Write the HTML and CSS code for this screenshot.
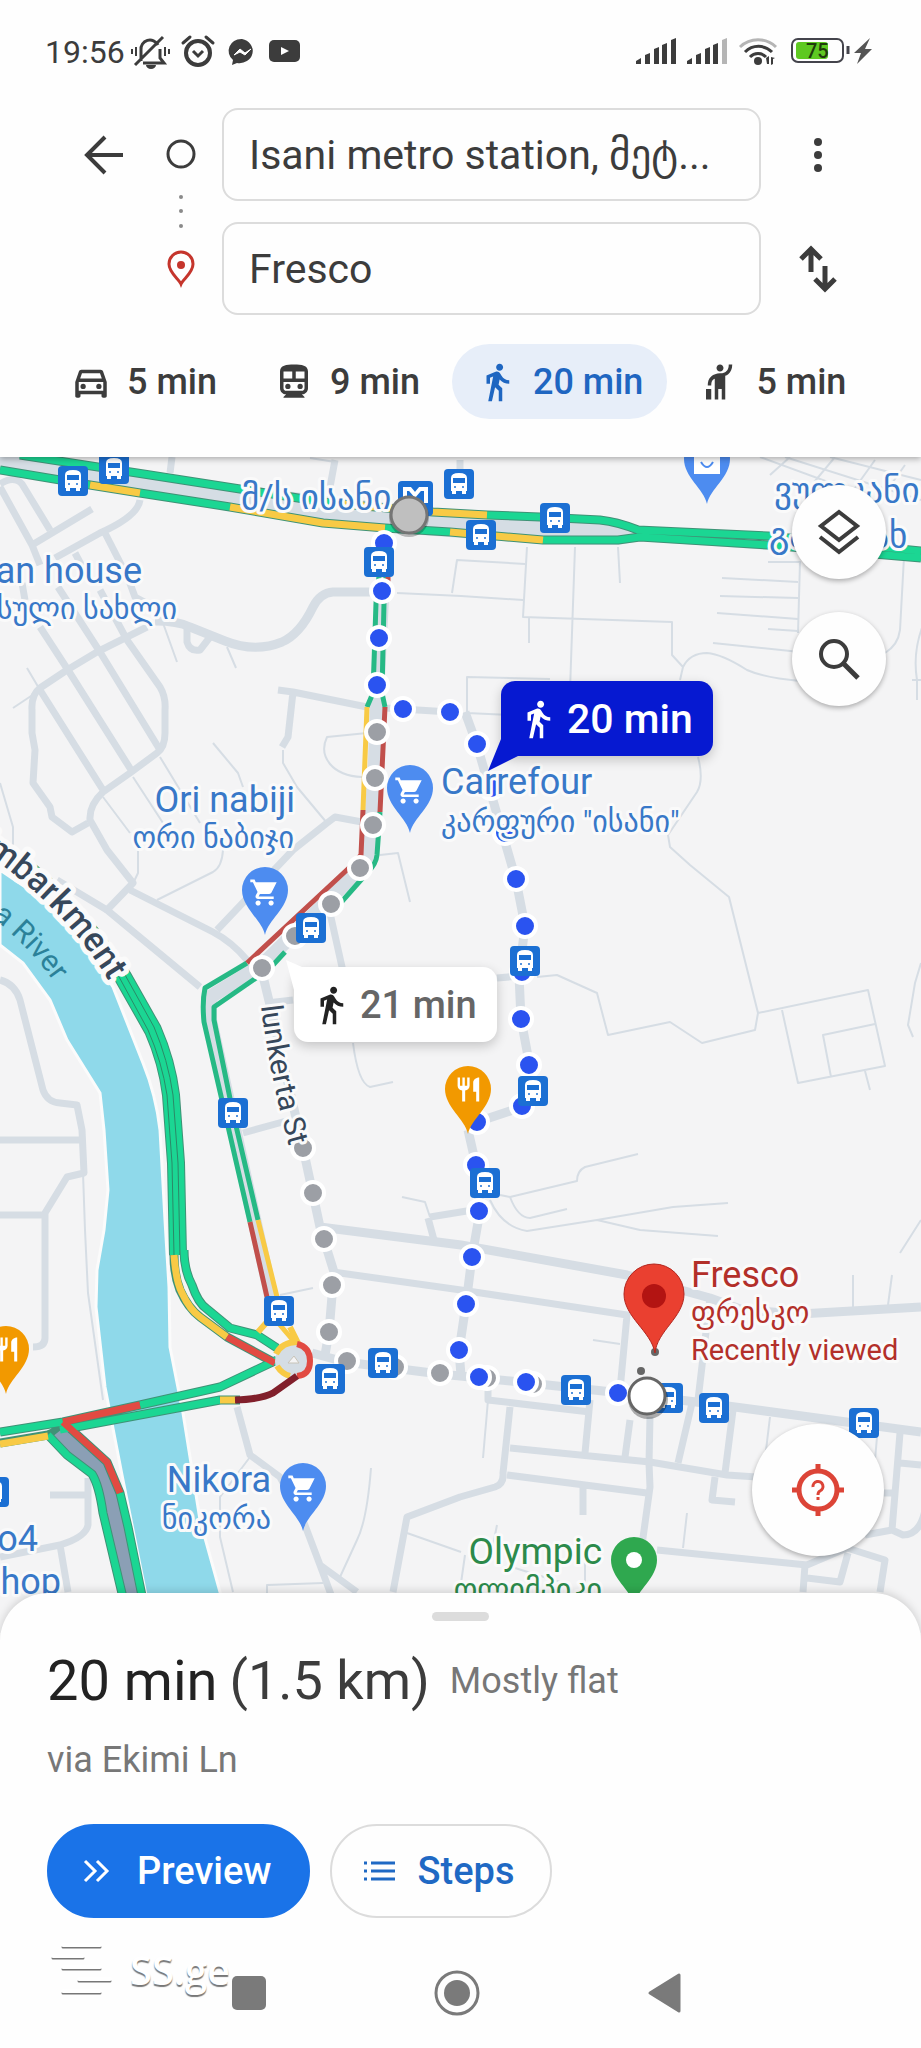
FILE: index.html
```html
<!DOCTYPE html>
<html lang="en">
<head>
    <meta charset="UTF-8">
    <meta name="viewport" content="width=device-width, initial-scale=1.0">
    <title>Directions to Fresco</title>
    <link rel="stylesheet" href="styles.css">
</head>
<body>
    <header class="header">
        <div class="status-bar">
            <span class="clock">19:56</span>
            <svg class="status-left" viewBox="0 0 172 36" aria-hidden="true">
                <!-- muted bell -->
                <g fill="none" stroke="#3c3c3c" stroke-width="3">
                    <path d="M10 27V16a9 9 0 0 1 17-5M29 15v9l4 5H12M4 31 32 3"/>
                    <path d="M5 13v9M1 15v5M34 13v9M38 15v5" stroke-width="2"/>
                </g>
                <path d="M15 31h10a5 4 0 0 1-10 0z" fill="#3c3c3c"/>
                <!-- alarm -->
                <g fill="none" stroke="#3c3c3c" stroke-width="4">
                    <circle cx="67" cy="19" r="12"/>
                    <path d="M62 17l5 5 5-5" stroke-width="3"/>
                    <path d="M52 9l7-6M75 3l7 6" stroke-linecap="round" stroke-width="3"/>
                </g>
                <!-- messenger -->
                <path d="M111 5a13 12 0 1 1-5 24l-5 2 1-5A13 12 0 0 1 111 5z" fill="#3c3c3c"/>
                <path d="M103 21l6-6 5 4 6-4-6 6-5-3z" fill="#fff" stroke="#fff"/>
                <!-- video -->
                <rect x="138" y="6" width="31" height="22" rx="5" fill="#3c3c3c"/>
                <path d="M150 13v8l8-4z" fill="#fff"/>
            </svg>
            <svg class="status-right" viewBox="0 0 238 36" aria-hidden="true">
                <g fill="#3c3c3c">
                    <path d="M1 30v-3l5-3v6zM10 30v-9l5-2v11zM19 30V15l5-2v17zM27 30V11l5-2v21zM36 30V6l5-2v26z"/>
                    <path d="M52 30v-3l5-3v6zM61 30v-9l5-2v11zM70 30V15l5-2v17zM78 30V11l5-2v21z"/>
                    <path d="M87 30V6l5-2v26z" fill="#b5b5b5"/>
                    <circle cx="123" cy="27" r="4"/>
                    <path d="M131 24l3-2v8h-2zM136 31v-8l4 1-2 1v5z"/>
                </g>
                <g fill="none" stroke="#3c3c3c" stroke-width="3">
                    <path d="M105 13a26 26 0 0 1 36 0" stroke="#b5b5b5"/>
                    <path d="M110 18a19 19 0 0 1 27 0"/>
                    <path d="M115 23a11 11 0 0 1 16 0"/>
                    <rect x="157" y="5" width="51" height="23" rx="6" stroke="#44444c" stroke-width="2"/>
                    <path d="M213 12v8" stroke="#44444c"/>
                </g>
                <rect x="161" y="8" width="32" height="17" rx="3" fill="#5ec921"/>
                <text x="171" y="24" class="battery-text">75</text>
                <path d="M235 4l-16 15h7l-4 11 15-15h-7z" fill="#555"/>
            </svg>
        </div>

        <form class="search">
            <button type="button" class="icon-button back" aria-label="Back">
                <svg viewBox="0 0 42 42" width="42" height="42" fill="none" stroke="#3c3c3c" stroke-width="4"><path d="M40 21H6M22 3 4 21l18 18"/></svg>
            </button>
            <svg class="rail" viewBox="0 0 80 207" width="80" height="207" aria-hidden="true">
                <circle cx="39" cy="46" r="13" fill="none" stroke="#3c3c3c" stroke-width="3"/>
                <g fill="#8a8a8a"><circle cx="39" cy="89" r="2"/><circle cx="39" cy="103" r="2"/><circle cx="39" cy="118" r="2"/></g>
                <path d="M39 176c-2-5-12-11-12-20a12 12 0 0 1 24 0c0 9-10 15-12 20z" fill="none" stroke="#c5352c" stroke-width="3"/>
                <circle cx="39" cy="157" r="4" fill="#c5352c"/>
            </svg>
            <input type="text" class="field" aria-label="Starting point" value="Isani metro station, მეტ...">
            <button type="button" class="icon-button" aria-label="More options">
                <svg viewBox="0 0 42 42" width="42" height="42" fill="#3c3c3c"><circle cx="21" cy="8" r="4"/><circle cx="21" cy="21" r="4"/><circle cx="21" cy="34" r="4"/></svg>
            </button>
            <input type="text" class="field field-to" aria-label="Destination" value="Fresco">
            <button type="button" class="icon-button" aria-label="Swap start and destination">
                <svg viewBox="0 0 42 48" width="42" height="48" fill="none" stroke="#3c3c3c" stroke-width="5"><path d="M14 27V4M4 14 14 4l10 10M28 21v23M18 34l10 10 10-10"/></svg>
            </button>
        </form>

        <nav class="modes" aria-label="Travel mode">
            <button type="button" class="mode">
                <svg class="icon" viewBox="0 0 24 24"><path d="M18.92 6.01C18.72 5.42 18.16 5 17.5 5h-11c-.66 0-1.21.42-1.42 1.01L3 12v8c0 .55.45 1 1 1h1c.55 0 1-.45 1-1v-1h12v1c0 .55.45 1 1 1h1c.55 0 1-.45 1-1v-8l-2.08-5.99zM6.85 7h10.29l1.04 3H5.81l1.04-3zM19 17H5v-5h14v5z"/><circle cx="7.5" cy="14.5" r="1.5"/><circle cx="16.5" cy="14.5" r="1.5"/></svg>
                5 min
            </button>
            <button type="button" class="mode">
                <svg class="icon" viewBox="0 0 24 24"><path fill-rule="evenodd" d="M12 2c-4.4 0-8 .5-8 4v9.500c0 1.900 1.500 3.500 3.500 3.500L6 20.500v.5h12v-.5L16.500 19c2 0 3.500-1.600 3.500-3.500V6c0-3.500-3.600-4-8-4zM6 6h5v4H6zM13 6h5v4h-5zM6 12h12v3.500c0 .8-.7 1.500-1.500 1.500h-9C6.700 17 6 16.300 6 15.500z"/><circle cx="8.500" cy="14.500" r="1.500"/><circle cx="15.500" cy="14.500" r="1.500"/></svg>
                9 min
            </button>
            <button type="button" class="mode active">
                <svg class="icon" viewBox="0 0 24 24"><path d="M13.5 5.500c1.100 0 2-.9 2-2s-.9-2-2-2-2 .9-2 2 .9 2 2 2zM9.800 8.900L7 23h2.100l1.800-8 2.100 2v6h2v-7.500l-2.100-2 .6-3C14.800 12 16.800 13 19 13v-2c-1.900 0-3.500-1-4.300-2.400l-1-1.600c-.4-.6-1-1-1.700-1-.3 0-.5.1-.8.1L6 8.300V13h2V9.600l1.800-.7"/></svg>
                20 min
            </button>
            <button type="button" class="mode">
                <svg class="icon" viewBox="0 0 24 24"><path d="M12 6c-1.100 0-2-.9-2-2s.9-2 2-2 2 .9 2 2S13.100 6 12 6zM17 2h2c0 2.700-.93 4.410-2.300 5.500-.5.400-1.100.7-1.700.9V22h-2v-6h-2v6H9V10.100c-.3.100-.5.200-.6.300C7.870 10.810 7 11.430 7 14H5c0-2.060.35-3.780 2.110-5.290C8.210 7.810 10 7 12 7s2.680-.46 3.480-1.060C15.960 5.550 17 4.760 17 2zM4 16h3v6H4z"/></svg>
                5 min
            </button>
        </nav>
    </header>

    <main class="map">
        <svg class="map-canvas" viewBox="0 457 921 1176" preserveAspectRatio="xMidYMin slice" role="img" aria-label="Walking routes from Isani metro station to Fresco">
            <defs>
                <g id="bus">
                    <rect x="-15" y="-15" width="30" height="30" rx="4" fill="#1b6fd3"/>
                    <path fill="#fff" fill-rule="evenodd" d="M-8 7V-6q0-5 8-5t8 5V7H7v3H3V7h-6v3h-4V7zM-6-6v5H6v-5z"/>
                    <circle cx="-4" cy="3" r="1" fill="#1b6fd3"/><circle cx="4" cy="3" r="1" fill="#1b6fd3"/>
                </g>
                <path id="pin" d="M0 0C-3-15-23-27-23-45A23 23 0 0 1 23-45C23-27 3-15 0 0z"/>
                <path id="cart" fill="#fff" d="M7 18c-1.100 0-2 .9-2 2s.9 2 2 2 2-.9 2-2-.9-2-2-2zM1 2v2h2l3.600 7.600-1.350 2.450C4.500 15.400 5.500 17 7 17h12v-2H7.400l1-2h7.200c.7 0 1.400-.4 1.700-1l4-8H5.200l-.9-2H1zm16 16c-1.100 0-2 .9-2 2s.9 2 2 2 2-.9 2-2-.9-2-2-2z"/>
                <path id="fork" fill="#fff" d="M11 9H9V2H7v7H5V2H3v7c0 2.100 1.700 3.800 3.800 4v9h2.500v-9C11.300 12.800 13 11.100 13 9V2h-2v7zm5-3v8h2.500v8H21V2c-2.800 0-5 2.200-5 4z"/>
                <g id="cart-pin">
                    <use href="#pin" fill="#4d8cf0"/>
                    <use href="#cart" transform="translate(-16 -58) scale(1.3)"/>
                </g>
                <g id="food-pin">
                    <use href="#pin" fill="#f29900"/>
                    <use href="#fork" transform="translate(-14 -59) scale(1.2)"/>
                </g>
                <circle id="dot" r="11"/>
                <path id="embankment-line" d="M-76 818Q46 878 109 981"/>
                <path id="river-line" d="M-66 880Q12 922 54 982"/>
                <path id="street-line" d="M261 1006Q270 1080 293 1160"/>
            </defs>

            <rect y="457" width="921" height="1176" fill="#f4f4f5"/>
            <path class="water" d="M0 945L23 963 50 1000 67 1040 100 1093 104 1130 108 1190 104 1230 97 1270 96 1307 105 1387 122 1475 155 1640H232L220 1592 200 1520 183 1413 170 1347 169 1287 165 1220 160 1130Q156 1095 143 1063L113 987 83 940Q60 912 40 897L0 870z"/>

            <!-- footpaths and driveways -->
            <g class="lane">
                <path d="M13 708L40 690 27 668M163 623L177 662M227 647L236 668M283 750V763L297 787 327 823M367 733L327 737Q320 752 330 764T362 777M213 743L238 773 243 787M160 757L200 823M133 777L163 823M103 797L130 833"/>
                <path d="M310 458L335 462M452 593L457 560 525 564M397 593L461 596 523 600M527 547L523 617 672 622V655L683 667 680 680M575 547L570 690M618 547L620 583M529 617V643M467 713V677L550 679M467 713L510 715M683 667Q690 653 707 653 722 654 747 670 765 678 800 681"/>
                <path d="M768 562H800L798 633M722 578L798 582M720 596L798 598M717 613L798 619M768 629L798 631M713 643L800 652M904 557L900 630Q898 645 885 653M925 620Q912 650 917 680V700M912 680H921"/>
                <path d="M760 457L850 490M785 457L921 500M830 457L921 480M770 475L790 457M810 487L835 457M850 495L875 460M880 500L905 465"/>
                <path d="M698 757Q704 780 697 792L668 835 670 847 690 865 729 897 758 1013 755 1030 702 1043 670 1022 608 1035 597 993 557 975 537 977M758 1013L868 990 885 1066 798 1083 782 1010M875 1024L823 1035 831 1077M865 1071L870 1090M921 963L915 983 908 1025 913 1037"/>
                <path d="M500 1195L510 1197 577 1181Q577 1171 585 1167L638 1154M510 1197Q518 1218 530 1218L567 1209M490 1200Q502 1227 527 1231L597 1220 673 1207 728 1203M597 1220L640 1230 718 1236M921 1220L900 1253"/>
                <path d="M402 1197L425 1202 430 1217M83 1173L85 1230 88 1293 103 1400M0 783L13 827V850M138 847V873L130 890M223 850Q222 867 213 872L157 900"/>
                <path d="M353 1043Q358 1083 370 1087L393 1082M380 855L398 853 410 902M313 1288L280 1295M371 1468Q367 1520 357 1540L340 1577M250 1457L220 1497V1537L233 1592M267 1600V1585L323 1583M407 1533L461 1552"/>
                <path d="M488 1400L483 1458M770 1417L766 1450M877 1437L875 1460M687 1513L683 1548M593 1340L620 1344M853 1275V1307M892 1275L888 1305M515 1568L560 1582M585 1560V1590M465 1555L460 1590M497 1525L493 1545"/>
            </g>

            <!-- local streets -->
            <g class="street">
                <path d="M0 484Q14 475 22 484L50 530M0 487L32 545 40 565M32 545L92 509M140 500Q138 516 100 533L55 558M105 533L128 578 135 597 150 605M75 553L84 570M22 583L25 600M172 457L170 473M335 460L330 487M460 460V470"/>
                <path d="M40 690L103 790M40 627L68 670 133 773M58 587L100 652 160 750M100 590L127 640 160 687Q166 697 165 710V733Q165 747 157 753L130 773 103 792Q89 805 90 820L107 850 133 883 107 910 200 987"/>
                <path d="M147 627L97 652 67 670 40 688Q31 695 32 710V733L35 750 33 783 50 807 52 817 72 832 88 823M187 627V642Q190 652 200 650L210 637M278 690L293 692 367 707M293 692L288 737 282 747M385 708L450 712M362 822L335 817 327 823 293 850 217 930"/>
                <path d="M130 890L213 932Q232 942 247 960M57 880L107 910M330 913L342 967 349 1000M243 1133L290 1120M267 1003L293 1000M497 978L520 976"/>
                <path d="M0 980Q15 984 20 1000L43 1090Q47 1102 60 1103L77 1105 82 1130 84 1173 67 1177 45 1213V1338Q45 1347 33 1347M0 1140H82M0 1215H45M50 1495H88M88 1478V1525Q86 1537 60 1545L0 1557M60 1545L68 1592"/>
                <path d="M430 1217L479 1209M428 1218L434 1240M333 1272L461 1290 627 1315 620 1390M710 1298L698 1400M630 1420L625 1457M650 1417L649 1463 650 1487 642 1545M692 1403L678 1463M733 1410L725 1473"/>
                <path d="M510 1407L503 1473Q504 1484 495 1487L460 1497 407 1517 393 1592M488 1387V1400L590 1412M590 1400L585 1453M510 1448L650 1462 727 1475 770 1478M507 1475L647 1493M583 1487V1515M715 1477L712 1500 735 1502"/>
                <path d="M657 1550L807 1565 847 1548 885 1560 880 1592M805 1565L803 1592M807 1578L840 1582 848 1553M900 1433L892 1530 865 1535M900 1463L921 1465M880 1493H892M925 1510Q920 1535 903 1535L892 1530M237 1407L250 1455 280 1477 303 1520 320 1565 333 1600M320 1565L357 1592"/>
            </g>

            <!-- wider streets under the walking routes -->
            <g class="avenue">
                <path d="M155 621Q178 621 190 627L225 641Q255 653 282 642 300 634 313 607 320 593 333 592H380"/>
                <path d="M465 712L477 745 490 790 516 880 525 926 519 975 521 1019 530 1067 522 1107 477 1122M468 1130L476 1165 480 1211 472 1257 466 1304 459 1351 461 1375"/>
                <path d="M261 968L270 1005 303 1148 320 1227 334 1272 329 1332 325 1355M320 1227L461 1245 627 1275 710 1298 743 1310 800 1314 921 1307M312 1353L345 1362 440 1374 520 1382 640 1395 720 1405 921 1432"/>
            </g>

            <!-- highway -->
            <path fill="#d5dde4" d="M0 452L240 486 433 508 617 518 640 528 921 551V560L640 541 618 545 543 544 380 532 230 511 0 474z"/>
            <g class="casing">
                <path d="M20 455L150 475 240 489 330 503 433 512 487 515 540 517 600 520Q618 522 638 530L768 536 921 551"/>
                <path d="M0 470L90 485 140 493 230 507 323 523 385 528 450 532 543 540H618L640 537 768 545 921 558"/>
            </g>
            <g class="traffic">
                <path d="M20 455L150 475 240 489 330 503M487 515L540 517 600 520Q618 522 638 530L768 536 921 551M0 470L90 485M140 493L230 507M385 528L450 532M543 540H618L640 537 768 545 921 558"/>
                <path class="slow" d="M330 503L433 512 487 515M90 485L140 493M230 507L323 523 385 528M450 532L543 540"/>
            </g>

            <!-- street with traffic in both directions -->
            <path class="median" d="M384 560L377 697 375 760 371 830Q370 862 357 872L262 965 210 997V1020L272 1300"/>
            <g class="traffic narrow">
                <path d="M379 577L376 603 373 693 367 707M386 577L384 603 382 693 385 707M380 812L377 855Q376 864 368 872L337 907M285 952L273 965M269 969L214 1007V1020L233 1113 258 1220M247 963L205 988Q202 1002 204 1022L250 1222"/>
                <path class="slow" d="M367 707L363 810M258 1220L277 1297 280 1325 297 1345"/>
                <path class="jam-soft" d="M385 707L380 812M363 810L361 855 350 867 247 963M250 1222L267 1297M388 577V582"/>
            </g>

            <!-- embankment -->
            <path class="casing wide" d="M-10 842Q64 888 123 977L153 1030Q167 1062 171 1095L176 1163 178 1255"/>
            <path class="traffic wide" d="M-10 842Q64 888 123 977L153 1030Q167 1062 171 1095L176 1163 178 1255"/>
            <path class="hairline" d="M118 975L148 1030Q162 1062 167 1095L172 1163 174 1255M124 973L154 1027Q168 1060 173 1095L178 1163 180 1255"/>
            <g class="casing">
                <path d="M174 1255Q174 1275 180 1290 188 1308 200 1317L227 1337 275 1363M184 1250Q184 1270 192 1285 198 1303 207 1309L230 1328 257 1335 277 1348"/>
                <path d="M0 1432L63 1422 140 1405 220 1387 277 1360M0 1443L48 1435 60 1430 220 1400 240 1400"/>
            </g>
            <path fill="#8b9fb5" d="M52 1437L67 1425 107 1462 120 1493 155 1640H128L103 1513 95 1478z"/>
            <g class="casing">
                <path d="M48 1435L67 1455 92 1474Q99 1485 103 1513L133 1640M63 1422L107 1462 120 1493 128 1527 151 1640"/>
            </g>
            <g class="traffic">
                <path d="M184 1250Q184 1270 192 1285 198 1303 207 1309L230 1328 257 1335 277 1348M0 1432L63 1422M140 1405L220 1387 277 1360M220 1400L60 1430M48 1435L67 1455 92 1474Q99 1485 103 1513L133 1640M120 1493L128 1527 151 1640"/>
                <path class="slow" d="M174 1255Q176 1282 182 1293 190 1310 200 1317L227 1337M48 1436L0 1444M220 1400H236"/>
                <path class="jam" d="M63 1422L140 1405M63 1422L107 1462 120 1493M227 1337L275 1363"/>
            </g>
            <circle cx="293" cy="1361" r="18" fill="#d5dde4"/>
            <path d="M288 1363h11l-5-7z" fill="#f4f4f5" stroke="#c8c4b8"/>
            <g class="traffic ring">
                <path class="slow" d="M297 1342Q282 1342 276 1354M277 1366Q282 1374 290 1376M290 1327L298 1343M267 1322L258 1332"/>
                <path class="jam" d="M297 1344Q310 1347 310 1361T297 1376"/>
                <path class="stop" d="M297 1376L273 1393Q262 1399 235 1400"/>
            </g>

            <g class="dots alt">
                <use href="#dot" x="377" y="732"/><use href="#dot" x="375" y="778"/><use href="#dot" x="373" y="825"/><use href="#dot" x="360" y="868"/><use href="#dot" x="331" y="904"/><use href="#dot" x="295" y="936"/><use href="#dot" x="262" y="968"/><use href="#dot" x="303" y="1148"/><use href="#dot" x="313" y="1193"/><use href="#dot" x="324" y="1239"/><use href="#dot" x="332" y="1285"/><use href="#dot" x="329" y="1332"/><use href="#dot" x="347" y="1361"/><use href="#dot" x="395" y="1367"/><use href="#dot" x="440" y="1373"/><use href="#dot" x="487" y="1378"/><use href="#dot" x="533" y="1384"/>
            </g>
            <g class="dots">
                <use href="#dot" x="384" y="543"/><use href="#dot" x="382" y="591"/><use href="#dot" x="379" y="638"/><use href="#dot" x="377" y="685"/><use href="#dot" x="403" y="709"/><use href="#dot" x="450" y="712"/><use href="#dot" x="477" y="744"/><use href="#dot" x="491" y="788"/><use href="#dot" x="505" y="833"/><use href="#dot" x="516" y="879"/><use href="#dot" x="525" y="926"/><use href="#dot" x="522" y="972"/><use href="#dot" x="521" y="1019"/><use href="#dot" x="529" y="1065"/><use href="#dot" x="522" y="1106"/><use href="#dot" x="477" y="1122"/><use href="#dot" x="476" y="1165"/><use href="#dot" x="479" y="1211"/><use href="#dot" x="472" y="1257"/><use href="#dot" x="466" y="1304"/><use href="#dot" x="459" y="1350"/><use href="#dot" x="479" y="1377"/><use href="#dot" x="526" y="1382"/><use href="#dot" x="618" y="1393"/>
            </g>

            <use href="#bus" x="73" y="481"/><use href="#bus" x="114" y="469"/><use href="#bus" x="459" y="484"/><use href="#bus" x="379" y="562"/><use href="#bus" x="555" y="518"/><use href="#bus" x="481" y="535"/><use href="#bus" x="311" y="928"/><use href="#bus" x="233" y="1113"/><use href="#bus" x="525" y="961"/><use href="#bus" x="533" y="1091"/><use href="#bus" x="485" y="1183"/><use href="#bus" x="279" y="1311"/><use href="#bus" x="330" y="1379"/><use href="#bus" x="383" y="1363"/><use href="#bus" x="-6" y="1492"/><use href="#bus" x="576" y="1390"/><use href="#bus" x="668" y="1398"/><use href="#bus" x="714" y="1408"/><use href="#bus" x="864" y="1423"/>

            <use href="#cart-pin" x="410" y="833"/>
            <use href="#cart-pin" x="265" y="935"/>
            <use href="#cart-pin" x="303" y="1531"/>
            <use href="#food-pin" x="468" y="1134"/>
            <use href="#food-pin" x="6" y="1394"/>
            <use href="#pin" x="707" y="504" fill="#4d8cf0"/>
            <path d="M694 455h26v19h-26z" fill="#fff"/>
            <path d="M701 462q6 10 12 0" fill="none" stroke="#4d8cf0" stroke-width="2"/>
            <use href="#pin" x="634" y="1605" fill="#2fa84f"/>
            <circle cx="634" cy="1560" r="8" fill="#fff"/>

            <rect x="398" y="481" width="35" height="35" rx="4" fill="#1b6fd3"/>
            <path d="M405 503v-14h5l5 6 5-6h6v14" fill="none" stroke="#fff" stroke-width="4"/>

            <g class="labels">
                <text class="local big" x="241" y="509">მ/ს ისანი</text>
                <text x="142" y="583" text-anchor="end">an house</text>
                <text class="local" x="177" y="619" text-anchor="end">სული სახლი</text>
                <text x="295" y="812" text-anchor="end">Ori nabiji</text>
                <text class="local" x="294" y="848" text-anchor="end">ორი ნაბიჯი</text>
                <text x="441" y="794">Carrefour</text>
                <text class="local" x="441" y="832">კარფური "ისანი"</text>
                <text class="local big" x="774" y="502">ვულკანი</text>
                <text class="local big" x="769" y="547">გამოსახ</text>
                <text x="271" y="1492" text-anchor="end">Nikora</text>
                <text class="local" x="271" y="1529" text-anchor="end">ნიკორა</text>
                <text x="38" y="1551" text-anchor="end">o4</text>
                <text x="61" y="1594" text-anchor="end">hop</text>
                <g class="sport">
                    <text x="602" y="1564" text-anchor="end">Olympic</text>
                    <text class="local" x="602" y="1600" text-anchor="end">ოლიმპიკი</text>
                </g>
                <g class="destination">
                    <text x="691" y="1287">Fresco</text>
                    <text class="local" x="691" y="1323">ფრესკო</text>
                    <text class="note" x="691" y="1360">Recently viewed</text>
                </g>
                <text class="road-name"><textPath href="#embankment-line" startOffset="100%" text-anchor="end">Embarkment</textPath></text>
                <text class="river-name"><textPath href="#river-line" startOffset="100%" text-anchor="end">a River</textPath></text>
                <text class="street-name"><textPath href="#street-line">lunkerta St</textPath></text>
            </g>

            <circle cx="409" cy="517" r="20" fill="#000" opacity=".25"/>
            <circle cx="409" cy="515" r="18" fill="#bfbfbf" stroke="#757575" stroke-width="3"/>

            <circle cx="655" cy="1352" r="4" fill="#666"/>
            <circle cx="641" cy="1371" r="4" fill="#666"/>
            <path d="M655 1353C651 1331 624 1317 624 1294A30 30 0 0 1 684 1294C684 1317 657 1331 655 1353z" fill="#ea4030" stroke="#b3261e"/>
            <circle cx="654" cy="1296" r="12" fill="#b31412"/>
            <circle cx="648" cy="1399" r="20" fill="#000" opacity=".3"/>
            <circle cx="647" cy="1396" r="18" fill="#fff" stroke="#666" stroke-width="3"/>
        </svg>

        <button type="button" class="bubble bubble-main">
            <svg class="bubble-tail" viewBox="0 0 36 32" width="36" height="32" aria-hidden="true"><path d="M13 0 0 32 34 15V0z" fill="#0619d1"/></svg>
            <svg class="icon" viewBox="0 0 24 24"><path d="M13.5 5.500c1.100 0 2-.9 2-2s-.9-2-2-2-2 .9-2 2 .9 2 2 2zM9.800 8.900L7 23h2.100l1.800-8 2.100 2v6h2v-7.500l-2.100-2 .6-3C14.800 12 16.800 13 19 13v-2c-1.900 0-3.500-1-4.300-2.400l-1-1.600c-.4-.6-1-1-1.700-1-.3 0-.5.1-.8.1L6 8.300V13h2V9.600l1.800-.7"/></svg>
            20 min
        </button>
        <button type="button" class="bubble bubble-alt">
            <svg class="bubble-tail" viewBox="0 0 30 30" width="30" height="30" aria-hidden="true"><path d="M0 0 8 30H30V7H16z" fill="#fff"/></svg>
            <svg class="icon" viewBox="0 0 24 24"><path d="M13.5 5.500c1.100 0 2-.9 2-2s-.9-2-2-2-2 .9-2 2 .9 2 2 2zM9.800 8.900L7 23h2.100l1.800-8 2.100 2v6h2v-7.500l-2.100-2 .6-3C14.800 12 16.800 13 19 13v-2c-1.900 0-3.500-1-4.300-2.400l-1-1.600c-.4-.6-1-1-1.700-1-.3 0-.5.1-.8.1L6 8.300V13h2V9.600l1.800-.7"/></svg>
            21 min
        </button>

        <div class="map-controls">
            <button type="button" class="fab" aria-label="Layers">
                <svg viewBox="0 0 44 48" width="44" height="48" fill="none" stroke="#3c3c3c" stroke-width="4"><path d="M22 4 40 18 22 32 4 18zM3 29 22 44 41 29"/></svg>
            </button>
            <button type="button" class="fab" aria-label="Search along route">
                <svg viewBox="0 0 44 44" width="44" height="44" fill="none" stroke="#3c3c3c" stroke-width="4"><circle cx="17" cy="17" r="13"/><path d="M26 26 41 41" stroke-width="5"/></svg>
            </button>
        </div>
        <button type="button" class="fab fab-locate" aria-label="My location">
            <svg viewBox="0 0 52 52" width="52" height="52" fill="none" stroke="#dc4437" stroke-width="5"><circle cx="26" cy="26" r="19"/><path d="M26 0v8M26 44v8M0 26h8M44 26h8"/><path d="M21 23a5 5 0 1 1 7 4q-2 1-2 4M26 33v3" stroke-width="3"/></svg>
        </button>
    </main>

    <section class="sheet">
        <div class="handle"></div>
        <h1 class="summary">
            <span>20 min</span>
            <span class="distance">(1.5 km)</span>
            <small class="terrain">Mostly flat</small>
        </h1>
        <p class="via">via Ekimi Ln</p>
        <div class="actions">
            <button type="button" class="action primary">
                <svg viewBox="0 0 30 30" width="30" height="30" fill="none" stroke="currentColor" stroke-width="3"><path d="M4 5l10 10L4 25M16 5l10 10-10 10"/></svg>
                Preview
            </button>
            <button type="button" class="action">
                <svg viewBox="0 0 34 30" width="34" height="30" fill="none" stroke="currentColor" stroke-width="3"><path d="M9 7h24M9 15h24M9 23h24M2 7h3M2 15h3M2 23h3"/></svg>
                Steps
            </button>
        </div>
    </section>

    <footer class="nav-bar">
        <div class="watermark">
            <svg viewBox="0 0 64 56" width="64" height="56" fill="none" stroke-linecap="round" aria-hidden="true">
                <g stroke="#777" stroke-width="3"><path d="M13 5h37M3 16h30M13 27h37M29 39h31M13 51h37"/></g>
                <g stroke="#fff" stroke-width="4"><path d="M13 3h37M3 14h30M13 25h37M29 37h31M13 49h37"/></g>
            </svg>
            SS.ge
        </div>
        <button type="button" class="nav-button" aria-label="Recent apps"><svg viewBox="0 0 46 46" width="46" height="46"><rect x="6" y="6" width="34" height="34" rx="5" fill="#7a7a7a"/></svg></button>
        <button type="button" class="nav-button" aria-label="Home"><svg viewBox="0 0 46 46" width="46" height="46"><circle cx="23" cy="23" r="21" fill="none" stroke="#7a7a7a" stroke-width="3"/><circle cx="23" cy="23" r="13" fill="#7a7a7a"/></svg></button>
        <button type="button" class="nav-button" aria-label="Go back"><svg viewBox="0 0 46 46" width="46" height="46"><path d="M8 23 37 5v36z" fill="#7a7a7a" stroke="#7a7a7a" stroke-width="3" stroke-linejoin="round"/></svg></button>
    </footer>
</body>
</html>
```

FILE: styles.css
```css
* {
    box-sizing: border-box;
}
body {
    margin: 0;
    min-height: 100vh;
    display: flex;
    flex-direction: column;
    font-family: Roboto, 'DejaVu Sans', sans-serif;
    color: #3c3c3c;
    background-color: #fefefe;
}
button {
    font: inherit;
    color: inherit;
    background: none;
    border: none;
    padding: 0;
    cursor: pointer;
}
svg {
    display: block;
    flex-shrink: 0;
}
.icon {
    width: 42px;
    height: 42px;
    fill: currentColor;
}

/* Header */
.header {
    position: relative;
    z-index: 2;
    padding-bottom: 38px;
    background-color: #fefefe;
    box-shadow: 0 2px 6px rgba(0, 0, 0, 0.3);
}
.status-bar {
    display: flex;
    align-items: center;
    height: 108px;
    padding: 0 48px 4px 45px;
}
.clock {
    font-size: 32px;
}
.status-left {
    width: 172px;
    height: 36px;
    margin-left: 6px;
}
.status-right {
    width: 238px;
    height: 36px;
    margin-left: auto;
}
.battery-text {
    font-size: 20px;
    font-weight: 500;
    fill: #1f3b0c;
}
.search {
    display: grid;
    grid-template-columns: 76px 80px 1fr 114px;
    row-gap: 21px;
    padding: 0 46px 0 66px;
}
.icon-button {
    display: flex;
    align-items: center;
    justify-content: center;
    height: 93px;
}
.rail {
    grid-column: 2;
    grid-row: 1 / 3;
}
.field {
    min-width: 0;
    height: 93px;
    padding: 0 25px;
    border: 2px solid #dcdcdc;
    border-radius: 16px;
    background-color: #fefefe;
    color: #3c3c3c;
    font-family: inherit;
    font-size: 41px;
    text-overflow: ellipsis;
}
.field-to {
    grid-column: 3;
}
.modes {
    display: flex;
    gap: 8px;
    padding: 29px 46px 0;
}
.mode {
    display: flex;
    align-items: center;
    gap: 15px;
    height: 75px;
    padding: 0 24px;
    border-radius: 38px;
    font-size: 36px;
    font-weight: 500;
    white-space: nowrap;
}
.mode.active {
    background-color: #e7eef9;
    color: #1f66c1;
}

/* Map */
.map {
    position: relative;
    flex: 1;
    min-height: 600px;
    overflow: hidden;
}
.map-canvas {
    position: absolute;
    inset: 0;
    width: 100%;
    height: 100%;
}
.water {
    fill: #8fd9ea;
    stroke: #fbfbfb;
    stroke-width: 3;
}
.lane,
.street,
.avenue,
.median {
    fill: none;
    stroke: #d6dde4;
    stroke-linejoin: round;
}
.lane {
    stroke-width: 2;
}
.street {
    stroke-width: 7;
}
.avenue {
    stroke-width: 9;
}
.median {
    stroke-width: 14;
}
.casing {
    fill: none;
    stroke: #3f9276;
    stroke-width: 9;
    stroke-linejoin: round;
}
.casing.wide {
    stroke-width: 18;
}
.traffic {
    fill: none;
    stroke: #1bd693;
    stroke-width: 7;
    stroke-linejoin: round;
}
.traffic.narrow {
    stroke: #26b985;
    stroke-width: 5;
}
.traffic.ring {
    stroke-width: 6;
}
.traffic.wide {
    stroke-width: 16;
}
.hairline {
    fill: none;
    stroke: #2b8a68;
}
.slow {
    stroke: #f8ca45;
}
.jam {
    stroke: #e24a42;
}
.jam-soft {
    stroke: #c14f4b;
}
.stop {
    stroke: #811f2b;
    stroke-width: 7;
}
.dots {
    fill: #2a53f0;
    stroke: #fff;
    stroke-width: 4;
}
.dots.alt {
    fill: #9c9fa5;
}
.labels {
    font-size: 36px;
    fill: #3878c8;
    stroke: #fafafa;
    stroke-width: 6;
    stroke-linejoin: round;
    paint-order: stroke;
}
.labels .local {
    font-size: 30px;
}
.labels .big {
    font-size: 35px;
}
.labels .note {
    font-size: 29px;
}
.labels .sport {
    font-size: 37px;
    fill: #2c8a4b;
}
.labels .destination {
    fill: #b3302a;
}
.road-name {
    font-size: 35px;
    font-weight: 500;
    fill: #36475a;
    stroke-width: 10;
}
.street-name {
    font-size: 30px;
    fill: #36475a;
}
.river-name {
    font-size: 30px;
    fill: #2b8199;
    stroke: none;
}
.bubble {
    position: absolute;
    display: flex;
    align-items: center;
    height: 75px;
    border-radius: 14px;
    font-size: 38px;
    font-weight: 500;
    white-space: nowrap;
    box-shadow: 0 4px 12px rgba(0, 0, 0, 0.2);
}
.bubble .icon {
    position: relative;
}
.bubble-tail {
    position: absolute;
}
.bubble-main {
    left: 501px;
    top: 224px;
    gap: 8px;
    padding: 0 20px 0 16px;
    background-color: #0619d1;
    color: #fff;
    font-size: 41px;
}
.bubble-main .bubble-tail {
    left: -13px;
    top: 58px;
}
.bubble-alt {
    left: 294px;
    top: 510px;
    gap: 8px;
    padding: 0 20px 0 16px;
    background-color: #fff;
    color: #666;
}
.bubble-alt .bubble-tail {
    left: -8px;
    top: -7px;
}
.bubble-alt .icon {
    fill: #222;
}
.map-controls {
    position: absolute;
    top: 28px;
    right: 35px;
    display: flex;
    flex-direction: column;
    gap: 33px;
}
.fab {
    display: flex;
    align-items: center;
    justify-content: center;
    width: 94px;
    height: 94px;
    border-radius: 50%;
    background-color: #fefefe;
    box-shadow: 0 2px 5px rgba(0, 0, 0, 0.3);
}
.fab-locate {
    position: absolute;
    right: 37px;
    bottom: 77px;
    width: 132px;
    height: 132px;
}

/* Bottom sheet */
.sheet {
    position: relative;
    z-index: 1;
    margin-top: -40px;
    padding: 19px 47px 0;
    border-radius: 48px 48px 0 0;
    background-color: #fefefe;
    box-shadow: 0 -2px 8px rgba(0, 0, 0, 0.15);
}
.handle {
    width: 57px;
    height: 9px;
    margin: 0 auto;
    border-radius: 5px;
    background-color: #dcdcdc;
}
.summary {
    display: flex;
    align-items: center;
    margin: 28px 0 0;
    font-size: 56px;
    line-height: 64px;
    font-weight: 400;
    color: #222;
}
.distance {
    margin-left: 12px;
    font-size: 54px;
    color: #3c3c3c;
}
.terrain {
    margin-left: 20px;
    font-size: 36px;
    color: #777;
}
.via {
    margin: 25px 0 0;
    font-size: 36px;
    line-height: 44px;
    color: #777;
}
.actions {
    display: flex;
    gap: 20px;
    margin-top: 42px;
}
.action {
    display: flex;
    align-items: center;
    gap: 22px;
    height: 94px;
    padding: 0 36px 0 30px;
    border: 2px solid #dcdcdc;
    border-radius: 47px;
    font-size: 38px;
    font-weight: 500;
    color: #1f69c4;
}
.action.primary {
    gap: 26px;
    padding: 0 36px 0 32px;
    border-color: #1a73e8;
    background-color: #1a73e8;
    color: #fff;
}

/* System navigation */
.nav-bar {
    position: relative;
    z-index: 1;
    display: flex;
    justify-content: center;
    gap: 162px;
    padding: 52px 8px 32px 0;
    background-color: #fefefe;
}
.nav-button {
    width: 46px;
    height: 46px;
}
.watermark {
    position: absolute;
    left: 50px;
    top: 24px;
    display: flex;
    align-items: center;
    gap: 16px;
    font-family: 'Open Sans', sans-serif;
    font-size: 40px;
    line-height: 56px;
    font-weight: 600;
    color: #fff;
    text-shadow: 0 2px 1px #777;
}
```
